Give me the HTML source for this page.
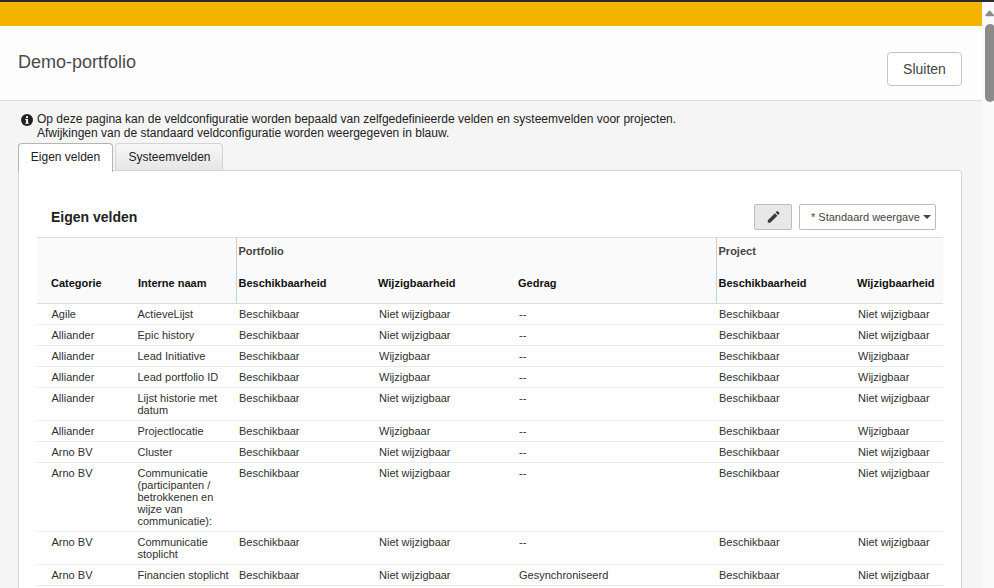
<!DOCTYPE html>
<html lang="nl">
<head>
<meta charset="utf-8">
<title>Demo-portfolio</title>
<style>
html,body{margin:0;padding:0;}
body{width:994px;height:588px;overflow:hidden;position:relative;background:#f5f5f5;font-family:"Liberation Sans",Arial,sans-serif;font-size:12px;color:#222;}
.abs{position:absolute;}
#topdark{left:0;top:0;width:994px;height:2px;background:#2a2a2a;}
#topbar{left:0;top:2px;width:982px;height:24px;background:#f4b400;}
#header{left:0;top:26px;width:982px;height:74px;background:#fdfdfd;border-bottom:1px solid #dcdcdc;}
#title{left:18px;top:52px;font-size:18px;color:#4a4a4a;line-height:20px;white-space:nowrap;}
#close{left:887px;top:52px;width:73px;height:32px;border:1px solid #c4c4c4;border-radius:4px;background:#fff;font-size:14px;color:#444;text-align:center;line-height:32px;}
#scroll{left:982px;top:2px;width:12px;height:586px;background:#fafafa;}
#thumb{left:985px;top:24px;width:10px;height:78px;border-radius:5px;background:#8b8b8b;}
#arrow{left:984px;top:9px;width:10px;height:9px;overflow:hidden;}
#info{left:37px;top:112px;line-height:14px;color:#222;white-space:nowrap;}
#infoicon{left:21px;top:114px;width:12px;height:12px;}
.tab{top:143px;height:27px;border:1px solid #c9c9c9;border-bottom:none;border-radius:4px 4px 0 0;text-align:center;line-height:27px;color:#222;box-sizing:border-box;}
#tab1{left:18px;width:95px;height:29px;background:#fff;z-index:3;border-color:#b4b4b4;}
#tab2{left:115px;width:108px;background:linear-gradient(#f7f7f7,#e6e6e6);top:143px;height:27px;line-height:27px;border-color:#d4d4d4;padding-left:1px;}
#panel{left:18px;top:170px;width:944px;border-radius:0 3px 0 0;height:430px;background:#fff;border:1px solid #d6d6d6;box-sizing:border-box;z-index:1;}
#h2{left:51px;top:209px;font-size:14px;font-weight:bold;color:#222;z-index:2;line-height:16px;}
#editbtn{left:754px;top:204px;width:38px;height:26px;border:1px solid #bdbdbd;border-radius:2px;background:#e8e8e8;box-sizing:border-box;z-index:2;}
#viewbtn{left:799px;top:204px;width:137px;height:26px;border:1px solid #bdbdbd;border-radius:2px;background:#fff;box-sizing:border-box;z-index:2;line-height:24px;color:#444;padding-left:11px;white-space:nowrap;font-size:11px;}
#caret{left:923px;top:215px;width:0;height:0;border-left:4px solid transparent;border-right:4px solid transparent;border-top:4px solid #444;z-index:3;}
table{position:absolute;left:37px;top:237px;width:906px;border-collapse:collapse;table-layout:fixed;z-index:2;font-size:11px;}
thead{background:#fafafa;}
thead tr.g th{height:26px;padding:0 0 0 2px;text-align:left;vertical-align:middle;color:#444;font-weight:bold;border-top:1px solid #dcdcdc;}
thead tr.h th{height:37px;padding:0 0 2px 2px;text-align:left;vertical-align:middle;font-weight:bold;color:#111;border-bottom:1px solid #dadada;}
tr.g th.vl{border-left:1px solid #cfcfcf;}
tr.h th.vl{border-left:1px solid #b5d9e8;}
tbody td{padding:4px 0 4px 3px;line-height:12px;vertical-align:top;border-bottom:1px solid #e9e9e9;color:#303030;}
th.c1{padding-left:14px !important;}
td.c1{padding-left:14.5px !important;}
th.c2{padding-left:3px !important;}
td.c2{padding-left:2.5px !important;}
</style>
</head>
<body>
<div class="abs" id="topbar"></div>
<div class="abs" id="header"></div>
<div class="abs" id="topdark"></div>
<div class="abs" id="title">Demo-portfolio</div>
<div class="abs" id="close">Sluiten</div>
<div class="abs" id="scroll"></div>
<svg class="abs" id="arrow" viewBox="0 0 10 9"><path d="M2 6.5 L5.6 2.3 L9.2 6.5 Z" fill="#8b8b8b" stroke="#8b8b8b" stroke-width="1.6" stroke-linejoin="round"/></svg>
<div class="abs" id="thumb"></div>
<svg class="abs" id="infoicon" viewBox="0 0 12 12"><circle cx="6" cy="6" r="6" fill="#222"/><rect x="5" y="2.2" width="2" height="1.9" fill="#fff"/><path d="M4.3 5h2.7v3.7h0.8v1.1H4.3V8.700000000000001h0.8V6.1H4.3z" fill="#fff"/></svg>
<div class="abs" id="info">Op deze pagina kan de veldconfiguratie worden bepaald van zelfgedefinieerde velden en systeemvelden voor projecten.<br>Afwijkingen van de standaard veldconfiguratie worden weergegeven in blauw.</div>
<div class="abs tab" id="tab1">Eigen velden</div>
<div class="abs tab" id="tab2">Systeemvelden</div>
<div class="abs" id="panel"></div>
<div class="abs" id="h2">Eigen velden</div>
<div class="abs" id="editbtn"><svg width="36" height="24" viewBox="0 0 36 24"><path transform="translate(0.3,1.3)" d="M12.5 16.5 L12.5 14 L19.6 6.9 L22.1 9.4 L15 16.5 Z M20.4 6.1 L21.5 5 Q22 4.6 22.5 5 L24 6.5 Q24.4 7 24 7.5 L22.9 8.6 Z" fill="#3c3c3c"/></svg></div>
<div class="abs" id="viewbtn">* Standaard weergave</div>
<div class="abs" id="caret"></div>
<table>
<colgroup><col style="width:98px"><col style="width:101px"><col style="width:140px"><col style="width:140px"><col style="width:200px"><col style="width:139px"><col style="width:88px"></colgroup>
<thead>
<tr class="g"><th class="c1"></th><th></th><th class="vl" colspan="3">Portfolio</th><th class="vl" colspan="2">Project</th></tr>
<tr class="h"><th class="c1">Categorie</th><th class="c2">Interne naam</th><th class="vl">Beschikbaarheid</th><th>Wijzigbaarheid</th><th>Gedrag</th><th class="vl">Beschikbaarheid</th><th>Wijzigbaarheid</th></tr>
</thead>
<tbody>
<tr><td class="c1">Agile</td><td class="c2">ActieveLijst</td><td>Beschikbaar</td><td>Niet wijzigbaar</td><td>--</td><td>Beschikbaar</td><td>Niet wijzigbaar</td></tr>
<tr><td class="c1">Alliander</td><td class="c2">Epic history</td><td>Beschikbaar</td><td>Niet wijzigbaar</td><td>--</td><td>Beschikbaar</td><td>Niet wijzigbaar</td></tr>
<tr><td class="c1">Alliander</td><td class="c2">Lead Initiative</td><td>Beschikbaar</td><td>Wijzigbaar</td><td>--</td><td>Beschikbaar</td><td>Wijzigbaar</td></tr>
<tr><td class="c1">Alliander</td><td class="c2">Lead portfolio ID</td><td>Beschikbaar</td><td>Wijzigbaar</td><td>--</td><td>Beschikbaar</td><td>Wijzigbaar</td></tr>
<tr><td class="c1">Alliander</td><td class="c2">Lijst historie met datum</td><td>Beschikbaar</td><td>Niet wijzigbaar</td><td>--</td><td>Beschikbaar</td><td>Niet wijzigbaar</td></tr>
<tr><td class="c1">Alliander</td><td class="c2">Projectlocatie</td><td>Beschikbaar</td><td>Wijzigbaar</td><td>--</td><td>Beschikbaar</td><td>Wijzigbaar</td></tr>
<tr><td class="c1">Arno BV</td><td class="c2">Cluster</td><td>Beschikbaar</td><td>Niet wijzigbaar</td><td>--</td><td>Beschikbaar</td><td>Niet wijzigbaar</td></tr>
<tr><td class="c1">Arno BV</td><td class="c2">Communicatie (participanten / betrokkenen en wijze van communicatie):</td><td>Beschikbaar</td><td>Niet wijzigbaar</td><td>--</td><td>Beschikbaar</td><td>Niet wijzigbaar</td></tr>
<tr><td class="c1">Arno BV</td><td class="c2">Communicatie stoplicht</td><td>Beschikbaar</td><td>Niet wijzigbaar</td><td>--</td><td>Beschikbaar</td><td>Niet wijzigbaar</td></tr>
<tr><td class="c1">Arno BV</td><td class="c2">Financien stoplicht</td><td>Beschikbaar</td><td>Niet wijzigbaar</td><td>Gesynchroniseerd</td><td>Beschikbaar</td><td>Niet wijzigbaar</td></tr>
</tbody>
</table>
</body>
</html>
